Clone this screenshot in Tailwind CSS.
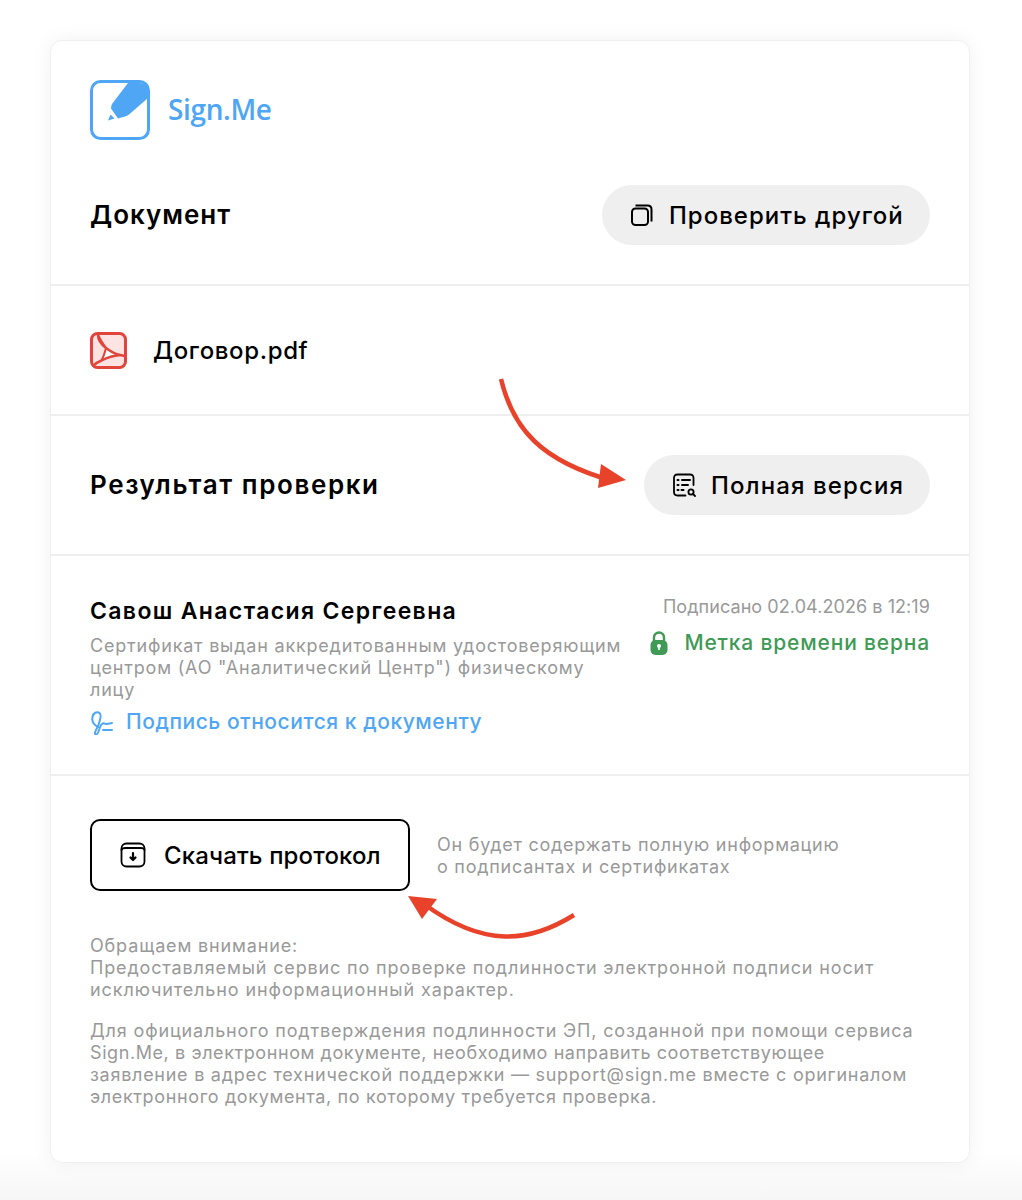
<!DOCTYPE html>
<html lang="ru"><head><meta charset="utf-8">
<script src="https://cdn.jsdelivr.net/npm/@tailwindcss/browser@4"></script>
</head>
<body class="bg-white">
<div class="h-[1200px] w-[1022px] overflow-hidden pt-[40px] pl-[50px] bg-gradient-to-b from-white from-[96%] to-[#f6f6f6] font-['Inter','Liberation_Sans',sans-serif] text-black">
<div class="relative w-[920px] h-[1123px] bg-white rounded-[12px] border border-[#f0f0f0] shadow-[0_0_20px_rgba(0,0,0,0.06)]">
  <header class="pt-[39px] px-[39px] h-[245px] border-b-2 border-[#efefef]">
    <div class="flex items-center gap-[18px] h-[60px]">
      <svg class="w-[60px] h-[60px]" viewBox="0 0 60 60" fill="none"><rect x="1.500" y="1.500" width="57" height="57" rx="9" stroke="#4fa6f5" stroke-width="3"/><path d="M38 3H50Q57 3 58 10V18L39 34.500Q37 36 35 36.500L28 38.500L21 28.500Q21 26 22 24L25 20Z" fill="#4fa6f5"/><path d="M20.500 34.500L24.500 38.500L18 40.500Z" fill="#4fa6f5"/></svg>
      <span class="font-['Open_Sans',sans-serif] text-[28px] leading-none font-semibold text-[#4fa6f5] tracking-[-0.35px] -mt-[2px]">Sign.Me</span>
    </div>
    <div class="flex items-center justify-between mt-[45px]">
      <h1 class="text-[26px] font-semibold tracking-[1px] mb-[2px]">Документ</h1>
      <button class="flex items-center h-[60px] w-[328px] rounded-full bg-[#efefef] pl-[28px] gap-[15px]">
        <svg class="w-[24px] h-[24px]" viewBox="0 0 24 24" fill="none" stroke="#000" stroke-width="2"><rect x="2" y="5.500" width="16" height="16.500" rx="3.500"/><path d="M5.500 2.500h12q4 0 4 4v12"/></svg>
        <span class="text-[24px] font-medium tracking-[1px] pt-[2px]">Проверить другой</span>
      </button>
    </div>
  </header>
  <section class="h-[130px] pl-[39px] flex items-center gap-[26px] border-b-2 border-[#efefef]">
    <svg class="w-[37px] h-[37px]" viewBox="0 0 37 37" fill="none"><rect x="1.500" y="1.500" width="34" height="34" rx="6" fill="#fde3e1" stroke="#e0443a" stroke-width="3"/><path d="M16 16L30 23Q19 24 11.500 28.500Q15 22 16 16Z" fill="#fff"/><path d="M8 3c0 6 4 10 8 13 4 3 9 6 14 7 2 .5 3 .5 5 1" stroke="#e0443a" stroke-width="2.400"/><path d="M2.500 34.500c3-3 6-5 9-6 6-3 13-5 18.500-5.500" stroke="#e0443a" stroke-width="2.400"/><path d="M16 16c-1 4-2 8-4.500 12.500M8 3q3 6 8 13" stroke="#e0443a" stroke-width="2"/></svg>
    <span class="text-[24px] font-medium tracking-[0.65px] pt-[2px]">Договор.pdf</span>
  </section>
  <section class="h-[140px] px-[39px] flex items-center justify-between border-b-2 border-[#efefef]">
    <h2 class="text-[26px] font-semibold tracking-[1.6px] mb-[2px]">Результат проверки</h2>
    <button class="flex items-center h-[60px] w-[286px] rounded-full bg-[#efefef] pl-[28px] gap-[15px]">
      <svg class="w-[24px] h-[24px]" viewBox="0 0 24 24" fill="none" stroke="#000" stroke-width="1.800" stroke-linecap="round"><path d="M21.500 12V5q0-3.500-3.500-3.500H5.500Q2 1.500 2 5v14q0 3.500 3.500 3.500h8"/><path d="M5.500 7h1M10 7h8M5.500 12h1M10 12h6M5.500 17h1M9.500 17h2" stroke-width="2"/><circle cx="19" cy="19" r="2.600"/><path d="M21 21l2 2"/></svg>
      <span class="text-[24px] font-medium tracking-[1.1px] pt-[2px]">Полная версия</span>
    </button>
  </section>
  <section class="h-[220px] px-[39px] pt-[40px] border-b-2 border-[#efefef]">
    <div class="flex justify-between">
      <div class="w-[535px]">
        <h3 class="text-[23px] leading-[30px] font-semibold tracking-[1.36px]">Савош Анастасия Сергеевна</h3>
        <p class="mt-[9px] text-[18px] leading-[22px] text-[#999] tracking-[0.8px]">Сертификат выдан аккредитованным удостоверяющим центром (АО "Аналитический Центр") физическому лицу</p>
        <div class="flex items-center gap-[11px] mt-[6px] text-[#4fa6f5]">
          <svg class="w-[25px] h-[25px]" viewBox="0 0 25 25" fill="none" stroke="#4fa6f5" stroke-width="2" stroke-linecap="round" stroke-linejoin="round"><path d="M8 17C4 15 1.500 12 2.500 7C3 3 7 1 9.500 3C12 5 10 11 8 16C6 20 3.500 24 6 24.500C9 25 9 16 12 14C14 12 15 14.500 17 14L22 13"/><path d="M13 20h9"/></svg>
          <span class="text-[21px] leading-[30px] font-medium tracking-[0.55px]">Подпись относится к документу</span>
        </div>
      </div>
      <div class="text-right">
        <p class="text-[18px] leading-[22px] text-[#999] tracking-[0.07px]">Подписано 02.04.2026 в 12:19</p>
        <div class="flex items-center justify-end gap-[16px] mt-[12px]">
          <svg class="w-[18px] h-[24px]" viewBox="0 0 18 24"><path d="M4 10V6.500a5 5 0 0 1 10 0V10" fill="none" stroke="#3f9a56" stroke-width="2.400"/><rect x="0.500" y="9" width="17" height="15" rx="5" fill="#3f9a56"/><circle cx="9" cy="15" r="2" fill="#fff"/><rect x="8.200" y="15" width="1.600" height="4" fill="#fff"/></svg>
          <span class="text-[21px] leading-[26px] font-medium text-[#3f9a56] tracking-[0.83px]">Метка времени верна</span>
        </div>
      </div>
    </div>
  </section>
  <section class="px-[39px] pt-[43px]">
    <div class="flex items-center gap-[27px]">
      <button class="flex items-center w-[320px] h-[72px] rounded-[10px] border-2 border-black bg-white pl-[28px] gap-[18px]">
        <svg class="w-[26px] h-[26px]" viewBox="0 0 26 26" fill="none" stroke="#000" stroke-width="1.800" stroke-linecap="round" stroke-linejoin="round"><rect x="1.500" y="1.500" width="23" height="23" rx="5"/><path d="M1.500 8q0-2 4-2h15q4 0 4 2"/><path d="M13 11v6.500M10.500 15.500l2.500 2.500 2.500-2.500" stroke-width="2.200"/></svg>
        <span class="text-[24px] font-medium tracking-[0.13px] pt-[2px]">Скачать протокол</span>
      </button>
      <p class="text-[18px] leading-[22px] text-[#999] tracking-[0.75px] pt-[2px]">Он будет содержать полную информацию<br>о подписантах и сертификатах</p>
    </div>
    <div class="mt-[44px] text-[18px] leading-[22px] text-[#999] tracking-[0.85px]">
      <p>Обращаем внимание:<br>Предоставляемый сервис по проверке подлинности электронной подписи носит<br><span class="tracking-[0.9px]">исключительно информационный характер.</span></p>
      <p class="mt-[19px]">Для официального подтверждения подлинности ЭП, созданной при помощи сервиса<br><span class="tracking-[0.58px]">Sign.Me, в электронном документе, необходимо направить соответствующее</span><br><span class="tracking-[0.73px]">заявление в адрес технической поддержки — support@sign.me вместе с оригиналом</span><br><span class="tracking-[0.63px]">электронного документа, по которому требуется проверка.</span></p>
    </div>
  </section>
  <svg class="absolute left-[-1px] top-[-1px] pointer-events-none" width="920" height="1123" viewBox="50 40 920 1123" fill="none">
    <path d="M501 379c12 50 40 82 112 102" stroke="#e8432a" stroke-width="4.500"/>
    <path d="M601 464l25 16-28 8z" fill="#e8432a"/>
    <path d="M574 915c-45 28-90 33-150-11" stroke="#e8432a" stroke-width="4.500"/>
    <path d="M408 896l29 3-15 20z" fill="#e8432a"/>
  </svg>
</div>
</div>
</body></html>
